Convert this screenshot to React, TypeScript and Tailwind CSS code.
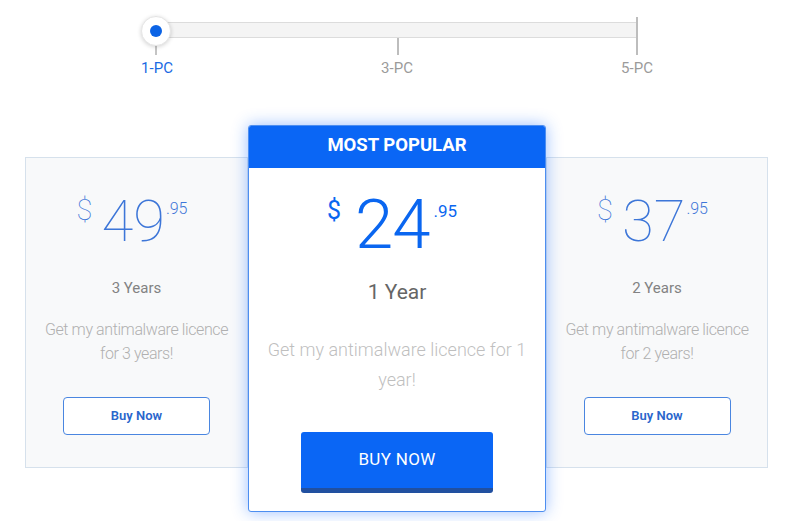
import React from "react";

function SideCard({ whole, years, desc }: { whole: string; years: string; desc: string }) {
  return (
    <div className="mt-[32px] h-[311px] bg-[#f8f9fa] border border-[#d6e1ec] flex flex-col items-center w-full">
      <div className="mt-[34px]">
        <div className="flex items-start justify-center text-[#3d76d8] pr-[9px]">
          <span className="text-[29px] leading-none font-thin mt-[4px] mr-[9px]">$</span>
          <span className="text-[58px] leading-none font-thin">{whole}</span>
          <span className="text-[16px] leading-none font-light mt-[9px] ml-[1px]">.95</span>
        </div>
      </div>
      <div className="mt-[28px] text-[15px] leading-[20px] text-[#828282] font-normal">{years}</div>
      <div className="mt-[20px] px-[10px] text-center text-[16px] leading-[24px] text-[#b0b0b0] font-light tracking-[-0.4px]">{desc}</div>
      <button className="mt-[31px] w-[147px] h-[38px] border border-[#4a86e0] rounded-[4px] bg-white text-[#2a66cc] text-[13px] font-semibold">
        Buy Now
      </button>
    </div>
  );
}

export default function App() {
  return (
    <div className="w-[800px] h-[521px] bg-white overflow-hidden" style={{ fontFamily: "Roboto, 'Liberation Sans', sans-serif" }}>
      {/* slider */}
      <div className="h-[125px] pt-[22px] pl-[157px]">
        <div className="relative w-[480px] h-[16px] bg-[#f4f4f4] border-y border-[#dcdcdc]">
          <div className="absolute left-[-2px] top-[-7px] w-[1.5px] h-[39px] bg-[#c4c4c4]" />
          <div className="absolute left-[240px] top-[15px] w-[1.5px] h-[17px] bg-[#bdbdbd]" />
          <div className="absolute left-[479px] top-[-6px] w-[1.5px] h-[38px] bg-[#bdbdbd]" />
          <div className="absolute left-[-16px] top-[-7px] w-[30px] h-[30px] rounded-full bg-white border border-[#e6e6e6] shadow-[0_1px_4px_rgba(0,0,0,0.18)] flex items-center justify-center">
            <div className="w-[12px] h-[12px] rounded-full bg-[#0b63e5]" />
          </div>
          <div className="absolute left-[-40px] top-[35px] w-[80px] text-center text-[15px] leading-[20px] text-[#1a6ae3]">1-PC</div>
          <div className="absolute left-[200px] top-[35px] w-[80px] text-center text-[15px] leading-[20px] text-[#9b9b9b]">3-PC</div>
          <div className="absolute left-[440px] top-[35px] w-[80px] text-center text-[15px] leading-[20px] text-[#9b9b9b]">5-PC</div>
        </div>
      </div>

      {/* cards */}
      <div className="flex items-start pl-[25px]">
        <div className="w-[223px]">
          <SideCard whole="49" years="3 Years" desc="Get my antimalware licence for 3 years!" />
        </div>
        <div className="relative z-10 w-[298px] h-[387px] bg-white border border-[#4d8ef0] rounded-[3px] shadow-[0_0_16px_rgba(30,110,255,0.45)] flex flex-col items-center">
          <div className="w-full h-[42px] pb-[3px] bg-[#0a66f5] rounded-t-[2px] flex items-center justify-center text-white text-[18.5px] font-bold">
            MOST POPULAR
          </div>
          <div className="mt-[22px]">
            <div className="flex items-start justify-center text-[#0a66f0] pr-[10px]">
              <span className="text-[25px] leading-none font-normal mt-[8px] mr-[14px]">$</span>
              <span className="text-[69px] leading-none font-light tracking-[-1px]">24</span>
              <span className="text-[17px] leading-none font-normal mt-[13px] ml-[4px]">.95</span>
            </div>
          </div>
          <div className="mt-[19px] text-[21px] leading-[28px] text-[#666666]">1 Year</div>
          <div className="mt-[29px] px-[16px] text-center text-[18px] leading-[30px] text-[#bfbfbf] font-light">
            Get my antimalware licence for 1 year!
          </div>
          <button className="mt-[37px] w-[192px] h-[61px] rounded-[3px] bg-[#0a66f5] border-b-[5px] border-[#2150a0] text-white text-[17px] font-normal tracking-[0.3px]">
            BUY NOW
          </button>
        </div>
        <div className="w-[222px]">
          <SideCard whole="37" years="2 Years" desc="Get my antimalware licence for 2 years!" />
        </div>
      </div>
    </div>
  );
}
